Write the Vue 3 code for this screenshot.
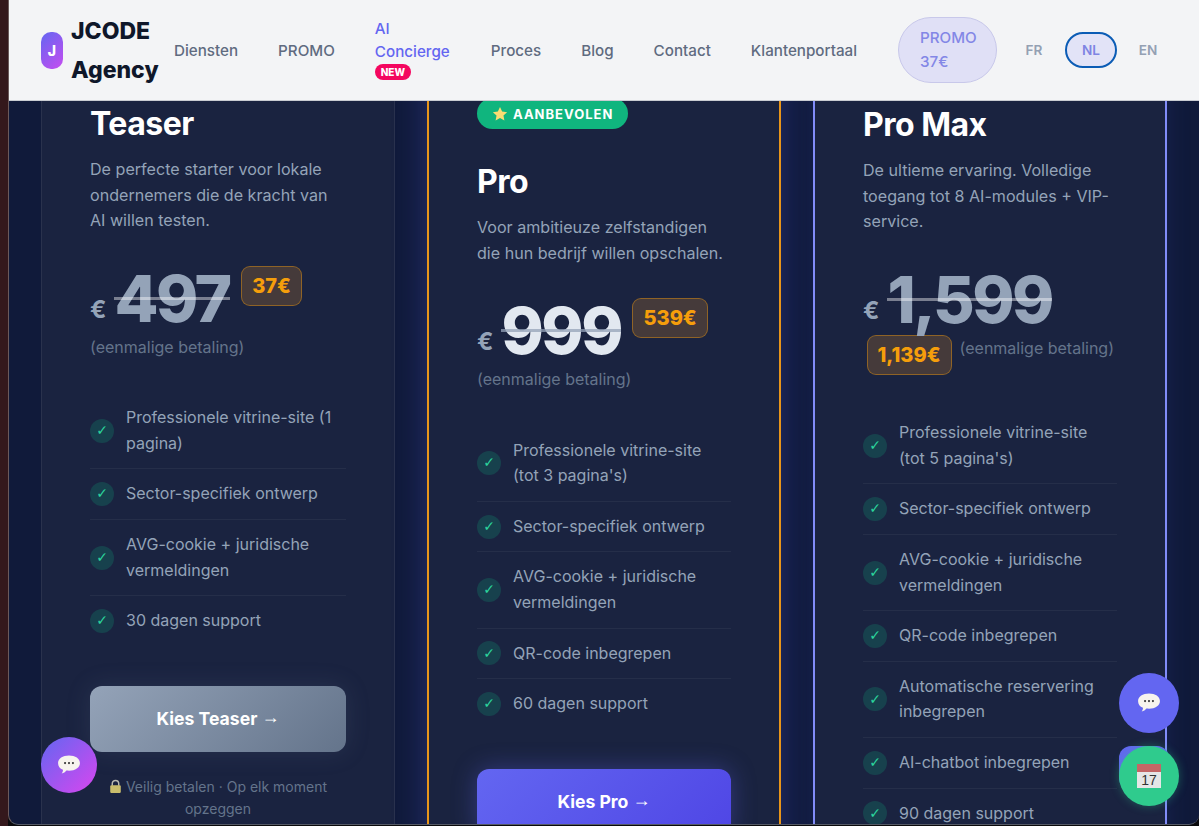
<template>
  <div class="screen">
    <div class="page">
      <header class="topbar">
        <div class="logo">
          <span class="logo-mark">J</span>
          <span class="logo-text">JCODE Agency</span>
        </div>
        <nav class="links">
          <a v-for="link in links" :key="link">{{ link }}</a>
          <a class="concierge">
            AI Concierge
            <span class="new-tag">NEW</span>
          </a>
          <a v-for="link in linksAfter" :key="link">{{ link }}</a>
        </nav>
        <a class="promo-pill">PROMO 37€</a>
        <div class="langs">
          <span class="lang">FR</span>
          <span class="lang active">NL</span>
          <span class="lang">EN</span>
        </div>
      </header>

      <main class="plans">
        <section
          v-for="plan in plans"
          :key="plan.name"
          :class="['plan', plan.kind]"
        >
          <div v-if="plan.kind === 'pro'" class="recommended">
            <svg class="star" viewBox="0 0 24 24" width="16" height="16">
              <path
                d="M12 1.5l3.2 6.900 7.500.9-5.500 5.100 1.400 7.400L12 18.100l-6.600 3.700 1.400-7.400L1.300 9.300l7.500-.9z"
                fill="#fbdc72"
              />
            </svg>
            AANBEVOLEN
          </div>
          <h2>{{ plan.name }}</h2>
          <p class="desc">{{ plan.desc }}</p>

          <div class="price">
            <span class="currency">€</span>
            <span class="amount">{{ plan.price }}</span>
            <span class="deal">{{ plan.deal }}</span>
            <span class="once">(eenmalige betaling)</span>
          </div>

          <ul class="features">
            <li v-for="feature in plan.features" :key="feature">
              <span class="check">✓</span>
              <span>{{ feature }}</span>
            </li>
          </ul>

          <a v-if="plan.kind !== 'max'" class="choose">
            Kies {{ plan.name }} <span class="arrow">→</span>
          </a>
          <p v-if="plan.kind === 'teaser'" class="safe">
            <svg class="lock" viewBox="0 0 16 18" width="13" height="15">
              <path
                d="M4 8V5.500a4 4 0 0 1 8 0V8"
                fill="none"
                stroke="#b9b9b0"
                stroke-width="1.800"
              />
              <rect x="1.500" y="7.500" width="13" height="9.500" rx="1.500" fill="#c9bd6c" />
            </svg>
            Veilig betalen · Op elk moment opzeggen
          </p>
        </section>
      </main>

      <button class="float chat-left">
        <svg viewBox="0 0 32 32" width="28" height="28">
          <path
            d="M16 5c7.200 0 12.500 3.500 12.500 8.800s-5.300 8.800-12.500 8.800c-1 0-2-.1-3-.2-1.200 1.900-3 3-5.400 3.400 1-1.300 1.500-2.500 1.500-4.400C5.500 20.700 3.500 17.600 3.500 13.800 3.500 8.500 8.800 5 16 5z"
            fill="#f7f4ee"
          />
          <circle cx="11.500" cy="13.800" r="1.200" fill="#333" />
          <circle cx="16" cy="13.800" r="1.200" fill="#333" />
          <circle cx="20.500" cy="13.800" r="1.200" fill="#333" />
        </svg>
      </button>
      <button class="float chat-right">
        <svg viewBox="0 0 32 32" width="28" height="28">
          <path
            d="M16 5c7.200 0 12.500 3.500 12.500 8.800s-5.300 8.800-12.500 8.800c-1 0-2-.1-3-.2-1.200 1.900-3 3-5.400 3.400 1-1.300 1.500-2.500 1.500-4.400C5.500 20.700 3.500 17.600 3.500 13.800 3.500 8.500 8.800 5 16 5z"
            fill="#f7f4ee"
          />
          <circle cx="11.500" cy="13.800" r="1.200" fill="#333" />
          <circle cx="16" cy="13.800" r="1.200" fill="#333" />
          <circle cx="20.500" cy="13.800" r="1.200" fill="#333" />
        </svg>
      </button>
      <div class="float-back"></div>
      <button class="float calendar">
        <span class="cal-icon">
          <span class="cal-top"></span>
          <span class="cal-day">17</span>
        </span>
      </button>
    </div>
  </div>
</template>

<script setup>
const links = ["Diensten", "PROMO"];
const linksAfter = ["Proces", "Blog", "Contact", "Klantenportaal"];

const plans = [
  {
    name: "Teaser",
    kind: "teaser",
    desc: "De perfecte starter voor lokale ondernemers die de kracht van AI willen testen.",
    price: "497",
    deal: "37€",
    features: [
      "Professionele vitrine-site (1 pagina)",
      "Sector-specifiek ontwerp",
      "AVG-cookie + juridische vermeldingen",
      "30 dagen support",
    ],
  },
  {
    name: "Pro",
    kind: "pro",
    desc: "Voor ambitieuze zelfstandigen die hun bedrijf willen opschalen.",
    price: "999",
    deal: "539€",
    features: [
      "Professionele vitrine-site (tot 3 pagina's)",
      "Sector-specifiek ontwerp",
      "AVG-cookie + juridische vermeldingen",
      "QR-code inbegrepen",
      "60 dagen support",
    ],
  },
  {
    name: "Pro Max",
    kind: "max",
    desc: "De ultieme ervaring. Volledige toegang tot 8 AI-modules + VIP-service.",
    price: "1,599",
    deal: "1,139€",
    features: [
      "Professionele vitrine-site (tot 5 pagina's)",
      "Sector-specifiek ontwerp",
      "AVG-cookie + juridische vermeldingen",
      "QR-code inbegrepen",
      "Automatische reservering inbegrepen",
      "AI-chatbot inbegrepen",
      "90 dagen support",
    ],
  },
];
</script>

<style>
html,
body {
  margin: 0;
  background: #2c1619;
}
</style>

<style scoped>
.screen {
  height: 826px;
  padding-left: 8px;
  overflow: hidden;
  font-family: Inter, "Noto Sans", sans-serif;
  background: linear-gradient(to right, #34181c 0 8px, #0a0a0c 8px);
}

.page {
  position: relative;
  height: 825px;
  overflow: hidden;
  background: #101a3a;
  border-left: 1px solid #6b5a5c;
  border-bottom: 1px solid #555a66;
  border-bottom-left-radius: 10px;
  border-bottom-right-radius: 10px;
  box-sizing: border-box;
}

/* barre du haut */
.topbar {
  position: absolute;
  top: 0;
  left: 0;
  right: 0;
  z-index: 5;
  height: 101px;
  box-sizing: border-box;
  display: flex;
  align-items: center;
  padding-left: 32px;
  background: #f3f4f6;
  border-bottom: 1px solid #c9ccd2;
}

.logo {
  display: flex;
  align-items: center;
  gap: 8px;
  flex: none;
  width: 133px;
}

.logo-mark {
  width: 22px;
  height: 37px;
  flex: none;
  display: flex;
  align-items: center;
  justify-content: center;
  border-radius: 10px;
  background: linear-gradient(135deg, #6366f1, #c64cf0);
  color: #fff;
  font-size: 14px;
  font-weight: 800;
}

.logo-text {
  width: 90px;
  padding-top: 2px;
  font-size: 23px;
  font-weight: 800;
  line-height: 39px;
  color: #0f172a;
}

.links {
  display: flex;
  align-items: center;
  gap: 40px;
  flex: none;
}

.links a {
  font-size: 15.2px;
  font-weight: 500;
  color: #5f6b80;
  white-space: nowrap;
}

.links .concierge {
  width: 76px;
  white-space: normal;
  line-height: 23px;
  color: #6366f1;
  margin-top: -3px;
}

.new-tag {
  display: block;
  width: 36px;
  height: 16px;
  margin-top: 1px;
  border-radius: 8px;
  background: #f4065f;
  color: #fff;
  font-size: 10px;
  font-weight: 800;
  line-height: 16px;
  text-align: center;
}

.promo-pill {
  width: 99px;
  height: 66px;
  box-sizing: border-box;
  flex: none;
  margin-left: 41px;
  padding: 8px 21px;
  border: 1px solid #c8c8ea;
  border-radius: 33px;
  background: #e0e0f6;
  color: #8387e6;
  font-size: 15.2px;
  font-weight: 500;
  line-height: 24px;
}

.langs {
  display: flex;
  align-items: center;
  gap: 6px;
  margin-left: 12px;
}

.lang {
  width: 50px;
  height: 36px;
  box-sizing: border-box;
  display: flex;
  align-items: center;
  justify-content: center;
  border-radius: 18px;
  color: #94a0b3;
  font-size: 13.6px;
  font-weight: 600;
}

.lang.active {
  width: 52px;
  border: 2px solid #0b5cb5;
  background: #e2e3f7;
  color: #7f85e3;
}

/* cartes */
.plans {
  display: grid;
  grid-template-columns: repeat(3, 354px);
  gap: 32px;
  padding: 56px 0 0 32px;
}

.plan {
  box-sizing: border-box;
  height: 900px;
  padding: 48px;
  border: 1px solid rgba(255, 255, 255, 0.07);
  border-radius: 16px;
  background: #1a2340;
}

.plan.pro {
  padding-top: 40px;
  border: 2px solid #e8951a;
  box-shadow: 0 0 34px rgba(80, 90, 230, 0.32);
}

.plan.max {
  border: 2px solid #818cf8;
  box-shadow: 0 0 24px rgba(60, 70, 170, 0.18);
}

.recommended {
  display: inline-flex;
  align-items: center;
  gap: 5px;
  height: 31px;
  padding: 0 15px;
  border-radius: 16px;
  background: #10b57e;
  color: #fff;
  font-size: 13px;
  font-weight: 700;
  letter-spacing: 1px;
  margin-bottom: 34px;
  vertical-align: top;
}

h2 {
  margin: 0 0 14px;
  font-size: 32px;
  font-weight: 700;
  line-height: 38px;
  letter-spacing: -0.5px;
  color: #fff;
}

.desc {
  margin: 0 0 32px;
  font-size: 16.1px;
  line-height: 25.6px;
  color: #94a3b8;
}

.price {
  display: flex;
  flex-wrap: wrap;
  gap: 3px 8px;
  align-items: flex-start;
}

.currency {
  align-self: flex-end;
  margin-bottom: 7px;
  font-size: 24px;
  line-height: 29px;
  font-weight: 700;
  color: #94a3b8;
}

.amount {
  position: relative;
  font-size: 64px;
  line-height: 65px;
  font-weight: 800;
  letter-spacing: -2.5px;
  color: #94a3b8;
}

.pro .amount {
  color: #e2e8f0;
}

.amount::after {
  content: "";
  position: absolute;
  left: 0;
  right: 0;
  top: 31px;
  height: 3px;
  background: rgba(255, 255, 255, 0.42);
}

.pro .amount::after {
  background: rgba(148, 163, 184, 0.75);
}

.deal {
  margin-left: 3.5px;
  padding: 0 10px;
  height: 40px;
  box-sizing: border-box;
  border: 1px solid rgba(245, 158, 11, 0.42);
  border-radius: 9px;
  background: #453a3a;
  color: #f59e0b;
  font-size: 20px;
  font-weight: 800;
  line-height: 38px;
}

.once {
  font-size: 16px;
  line-height: 26px;
  color: #64748b;
}

.features {
  list-style: none;
  margin: 33.5px 0 40px;
  padding: 0;
}

.features li {
  display: flex;
  align-items: center;
  gap: 12px;
  padding: 12px 0;
  font-size: 16px;
  line-height: 25.6px;
  color: #94a3b8;
  border-bottom: 1px solid rgba(255, 255, 255, 0.05);
}

.features li:last-child {
  border-bottom: 0;
}

.check {
  flex: none;
  width: 24px;
  height: 24px;
  display: flex;
  align-items: center;
  justify-content: center;
  border-radius: 50%;
  background: rgba(16, 185, 129, 0.2);
  color: #2bd49c;
  font-family: "DejaVu Sans", sans-serif;
  font-size: 14px;
  font-weight: 700;
}

.choose {
  display: block;
  padding: 20px;
  border-radius: 12px;
  background: linear-gradient(135deg, #94a3b8, #64748b);
  box-shadow: 0 0 24px rgba(100, 116, 139, 0.2);
  color: #fff;
  font-size: 17.6px;
  font-weight: 700;
  line-height: 26px;
  text-align: center;
}

.arrow {
  font-family: "Liberation Sans", sans-serif;
  font-size: 18px;
  line-height: 0;
  vertical-align: 2px;
}

.pro .choose {
  background: linear-gradient(135deg, #6366f1, #4f46e5);
  box-shadow: 0 0 24px rgba(99, 102, 241, 0.35);
}

.safe {
  margin: 24px 0 0;
  font-size: 14px;
  line-height: 22px;
  color: #64748b;
  text-align: center;
}

.lock {
  vertical-align: -2px;
}

/* boutons flottants */
.float {
  position: absolute;
  z-index: 6;
  display: flex;
  align-items: center;
  justify-content: center;
  padding: 0;
  border: 0;
  border-radius: 50%;
}

.chat-left {
  left: 32px;
  top: 737px;
  width: 56px;
  height: 56px;
  background: linear-gradient(135deg, #6366f1, #d946ef);
}

.chat-right {
  left: 1110px;
  top: 673px;
  width: 60px;
  height: 60px;
  background: #6366f1;
}

.float-back {
  position: absolute;
  z-index: 6;
  left: 1110px;
  top: 746px;
  width: 50px;
  height: 44px;
  border-radius: 12px;
  background: #6366f1;
}

.calendar {
  left: 1110px;
  top: 746px;
  width: 60px;
  height: 60px;
  background: #2fcb8d;
  box-shadow: 0 0 10px rgba(47, 203, 141, 0.35);
}

.cal-icon {
  display: flex;
  flex-direction: column;
  width: 24px;
  height: 24px;
  background: #e6e6e6;
}

.cal-top {
  height: 8px;
  background: #c46666;
}

.cal-day {
  font-size: 14px;
  font-weight: 500;
  line-height: 16px;
  color: #333;
  text-align: center;
}
</style>
